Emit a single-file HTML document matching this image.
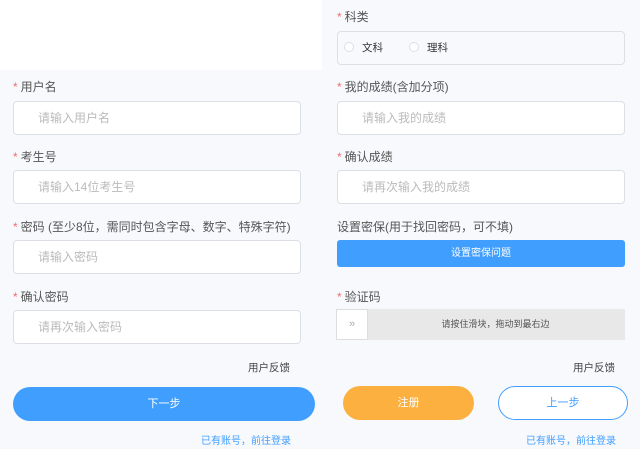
<!DOCTYPE html><html><head><meta charset="utf-8"><style>
*{margin:0;padding:0;box-sizing:border-box}
body{width:640px;height:449px;background:#f8f9fd;font-family:"Liberation Sans","Noto Sans CJK SC",sans-serif;position:relative;overflow:hidden;color:#555}
.a{position:absolute}
.w{left:0;top:0;width:322px;height:70px;background:#fff}
.l{font-size:12px;color:#555;line-height:14px}
.l b{color:#f56c6c;font-weight:normal;margin-right:3px}
.i{border:1px solid #dcdfe6;border-radius:4px;background:#fff;height:34px;font-size:12px;color:#bbb;line-height:32px;padding-left:24px}
.btn{border-radius:18px;color:#fff;font-size:11px;text-align:center}
.lk{font-size:10px;color:#409eff}
.r{display:inline-block;width:10px;height:10px;border:1px solid #dcdfe6;border-radius:50%;vertical-align:-1px;margin-right:8px;background:#fff}
</style></head><body>
<div class="a w"></div>
<div class="a l" style="left:13px;top:80px"><b>*</b>用户名</div>
<div class="a i" style="left:13px;top:101px;width:288px">请输入用户名</div>
<div class="a l" style="left:13px;top:150px"><b>*</b>考生号</div>
<div class="a i" style="left:13px;top:170px;width:288px">请输入14位考生号</div>
<div class="a l" style="left:13px;top:220px"><b>*</b>密码 (至少8位，需同时包含字母、数字、特殊字符)</div>
<div class="a i" style="left:13px;top:240px;width:288px">请输入密码</div>
<div class="a l" style="left:13px;top:290px"><b>*</b>确认密码</div>
<div class="a i" style="left:13px;top:310px;width:288px">请再次输入密码</div>
<div class="a" style="left:248px;top:360px;font-size:10.5px;color:#444">用户反馈</div>
<div class="a btn" style="left:13px;top:387px;width:302px;height:34px;line-height:34px;background:#409eff">下一步</div>
<div class="a lk" style="left:201px;top:432px">已有账号，前往登录</div>

<div class="a l" style="left:337px;top:10px"><b>*</b>科类</div>
<div class="a" style="left:337px;top:31px;width:288px;height:34px;border:1px solid #dcdfe6;border-radius:4px;font-size:10.5px;color:#333;line-height:32px;padding-left:6px"><span class="r"></span>文科<span class="r" style="margin-left:26px"></span>理科</div>
<div class="a l" style="left:337px;top:80px"><b>*</b>我的成绩(含加分项)</div>
<div class="a i" style="left:337px;top:101px;width:288px">请输入我的成绩</div>
<div class="a l" style="left:337px;top:150px"><b>*</b>确认成绩</div>
<div class="a i" style="left:337px;top:170px;width:288px">请再次输入我的成绩</div>
<div class="a l" style="left:337px;top:220px">设置密保(用于找回密码，可不填)</div>
<div class="a" style="left:337px;top:240px;width:288px;height:27px;background:#409eff;border-radius:3px;color:#fff;font-size:10px;text-align:center;line-height:27px">设置密保问题</div>
<div class="a l" style="left:337px;top:290px"><b>*</b>验证码</div>
<div class="a" style="left:336px;top:309px;width:289px;height:31px;background:#e8e8e8;font-size:9px;color:#555;text-align:center;line-height:31px;padding-left:30px">请按住滑块，拖动到最右边</div>
<div class="a" style="left:336px;top:309px;width:32px;height:31px;background:#fff;border:1px solid #ddd;color:#aaa;font-size:11px;text-align:center;line-height:29px">»</div>
<div class="a" style="left:573px;top:360px;font-size:10.5px;color:#444">用户反馈</div>
<div class="a btn" style="left:343px;top:386px;width:131px;height:34px;line-height:34px;background:#fbb040">注册</div>
<div class="a btn" style="left:498px;top:386px;width:130px;height:34px;line-height:32px;background:#fff;border:1px solid #409eff;color:#409eff">上一步</div>
<div class="a lk" style="left:526px;top:432px">已有账号，前往登录</div>
</body></html>
